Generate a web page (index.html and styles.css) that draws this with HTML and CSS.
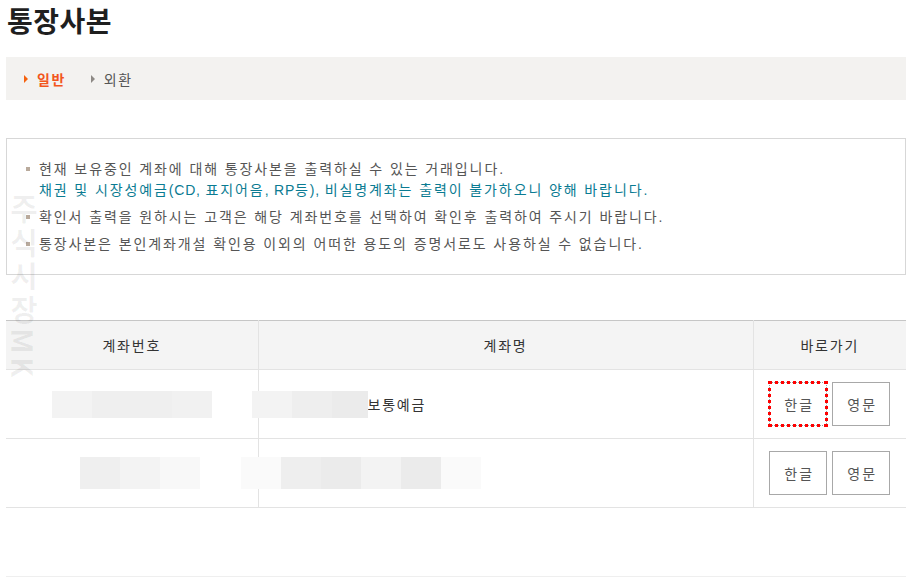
FILE: index.html
```html
<!DOCTYPE html>
<html lang="ko">
<head>
<meta charset="utf-8">
<title>통장사본</title>
<link rel="stylesheet" href="styles.css">
</head>
<body>
<div class="page">
  <h1 class="title">통장사본</h1>
  <ul class="tabs">
    <li class="tab active">일반</li>
    <li class="tab">외환</li>
  </ul>

  <div class="notice">
    <ul class="notice-list">
      <li>현재 보유중인 계좌에 대해 통장사본을 출력하실 수 있는 거래입니다.<br><span class="teal">채권 및 시장성예금<span class="lat">(CD, </span>표지어음<span class="lat">, RP</span>등<span class="lat">), </span>비실명계좌는 출력이 불가하오니 양해 바랍니다.</span></li>
      <li>확인서 출력을 원하시는 고객은 해당 계좌번호를 선택하여 확인후 출력하여 주시기 바랍니다.</li>
      <li>통장사본은 본인계좌개설 확인용 이외의 어떠한 용도의 증명서로도 사용하실 수 없습니다.</li>
    </ul>
  </div>

  <table class="accounts">
    <colgroup>
      <col class="c-num">
      <col class="c-name">
      <col class="c-go">
    </colgroup>
    <thead>
      <tr><th>계좌번호</th><th>계좌명</th><th>바로가기</th></tr>
    </thead>
    <tbody>
      <tr>
        <td class="center">
          <span class="redact r-h27"><span class="seg w40 g1"></span><span class="seg w80 g2"></span><span class="seg w40 g3"></span></span>
        </td>
        <td class="left">
          <span class="redact r-h27 shift7"><span class="seg w40 g1"></span><span class="seg w40 g4"></span><span class="seg w36 g5"></span></span><span class="acct-name">보통예금</span>
        </td>
        <td class="center">
          <div class="btns"><button class="btn focus">한글</button><button class="btn">영문</button></div>
        </td>
      </tr>
      <tr>
        <td class="center">
          <span class="redact r-h32 push16"><span class="seg w40 g2"></span><span class="seg w40 g1"></span><span class="seg w40 g6"></span></span>
        </td>
        <td class="left">
          <span class="redact r-h32 shift18"><span class="seg w40 g7"></span><span class="seg w40 g4"></span><span class="seg w40 g5"></span><span class="seg w40 g1"></span><span class="seg w40 g5"></span><span class="seg w40 g7"></span></span>
        </td>
        <td class="center">
          <div class="btns"><button class="btn">한글</button><button class="btn">영문</button></div>
        </td>
      </tr>
    </tbody>
  </table>

  <div class="rule"></div>

  <div class="watermark">주식시장MK</div>
</div>
</body>
</html>
```
FILE: styles.css
```css
html, body {
  margin: 0;
  padding: 0;
  background: #fff;
}

body {
  font-family: "Liberation Sans", "Noto Sans CJK KR", sans-serif;
  color: #555;
}

.page {
  position: relative;
  width: 900px;
  margin-left: 6px;
}

.title {
  margin: 0;
  padding-left: 1px;
  font-family: "Noto Sans CJK KR", sans-serif;
  font-size: 28px;
  line-height: 40px;
  font-weight: bold;
  letter-spacing: 0.5px;
  color: #1f1f1f;
}

/* tabs */
.tabs {
  margin: 17px 0 0;
  padding: 3px 0 0 18px;
  box-sizing: border-box;
  list-style: none;
  height: 43px;
  background: #f3f2f0;
  display: flex;
  align-items: center;
  gap: 25px;
}

.tab {
  position: relative;
  padding-left: 13px;
  font-size: 14px;
  line-height: 20px;
  letter-spacing: 1.5px;
  color: #555;
}

.tab::before {
  content: "";
  position: absolute;
  left: 0;
  top: 5px;
  border-left: 4px solid #8d8985;
  border-top: 4px solid transparent;
  border-bottom: 4px solid transparent;
}

.tab.active {
  color: #f2561d;
  font-weight: bold;
}

.tab.active::before {
  border-left-color: #f5620f;
}

/* notice box */
.notice {
  margin-top: 38px;
  border: 1px solid #d7d7d7;
  padding: 20px 19px 19px;
}

.notice-list {
  margin: 0;
  padding: 0;
  list-style: none;
}

.notice-list li {
  position: relative;
  padding-left: 13px;
  font-size: 14px;
  line-height: 21px;
  letter-spacing: 1.9px;
  color: #555;
}

.notice-list li + li {
  margin-top: 6px;
}

.notice-list li::before {
  content: "";
  position: absolute;
  left: 0;
  top: 8px;
  width: 4px;
  height: 4px;
  background: #b9aa9c;
}

.teal {
  color: #0a7b92;
}

.lat {
  letter-spacing: 0.8px;
}

/* table */
.accounts {
  margin-top: 45px;
  width: 900px;
  border-collapse: collapse;
  table-layout: fixed;
  border-top: 1px solid #c6c6c6;
}

.c-num { width: 252px; }
.c-name { width: 495px; }
.c-go { width: 153px; }

.accounts th {
  height: 48px;
  padding: 0;
  background: #f4f4f4;
  font-weight: normal;
  font-size: 14px;
  letter-spacing: 1.8px;
  color: #333;
  border-bottom: 1px solid #e3e3e3;
}

.accounts td {
  height: 68px;
  padding: 0;
  border-bottom: 1px solid #e3e3e3;
  font-size: 14px;
  letter-spacing: 1.8px;
  color: #333;
  vertical-align: middle;
}

.accounts th + th,
.accounts td + td {
  border-left: 1px solid #e3e3e3;
}

.center { text-align: center; }
.left { text-align: left; }

.redact {
  position: relative;
  display: inline-flex;
  vertical-align: middle;
}

.r-h27 .seg { height: 27px; }
.r-h32 .seg { height: 32px; }

.shift7 { margin-left: -7px; }
.shift18 { margin-left: -18px; }
.push16 { margin-left: 16px; }

.seg { display: block; }
.w36 { width: 36px; }
.w40 { width: 40px; }
.w80 { width: 80px; }

.g1 { background: #f3f3f3; }
.g2 { background: #efefef; }
.g3 { background: #f1f1f1; }
.g4 { background: #eeeeee; }
.g5 { background: #ebebeb; }
.g6 { background: #f8f8f8; }
.g7 { background: #fafafa; }

.acct-name {
  vertical-align: middle;
  line-height: 20px;
}

.btns {
  display: inline-flex;
  gap: 5px;
  vertical-align: middle;
}

.btn {
  width: 58px;
  height: 44px;
  padding: 0 0 0 2px;
  border: 1px solid #a8a8a8;
  background: #fff;
  font-family: "Liberation Sans", "Noto Sans CJK KR", sans-serif;
  font-size: 14px;
  letter-spacing: 2px;
  color: #555;
  cursor: pointer;
}

.btn.focus {
  border: 1px dotted #999;
  outline: 3px dotted #ff0000;
  outline-offset: -2px;
}

.rule {
  margin-top: 68px;
  border-top: 1px solid #efefef;
}

/* watermark overlay */
.watermark {
  position: absolute;
  left: 3px;
  top: 194px;
  writing-mode: vertical-rl;
  font-family: "Noto Sans CJK KR", "Liberation Sans", sans-serif;
  font-size: 30px;
  font-weight: bold;
  line-height: 1;
  letter-spacing: 3.5px;
  color: rgba(0, 0, 0, 0.06);
  pointer-events: none;
}
```
